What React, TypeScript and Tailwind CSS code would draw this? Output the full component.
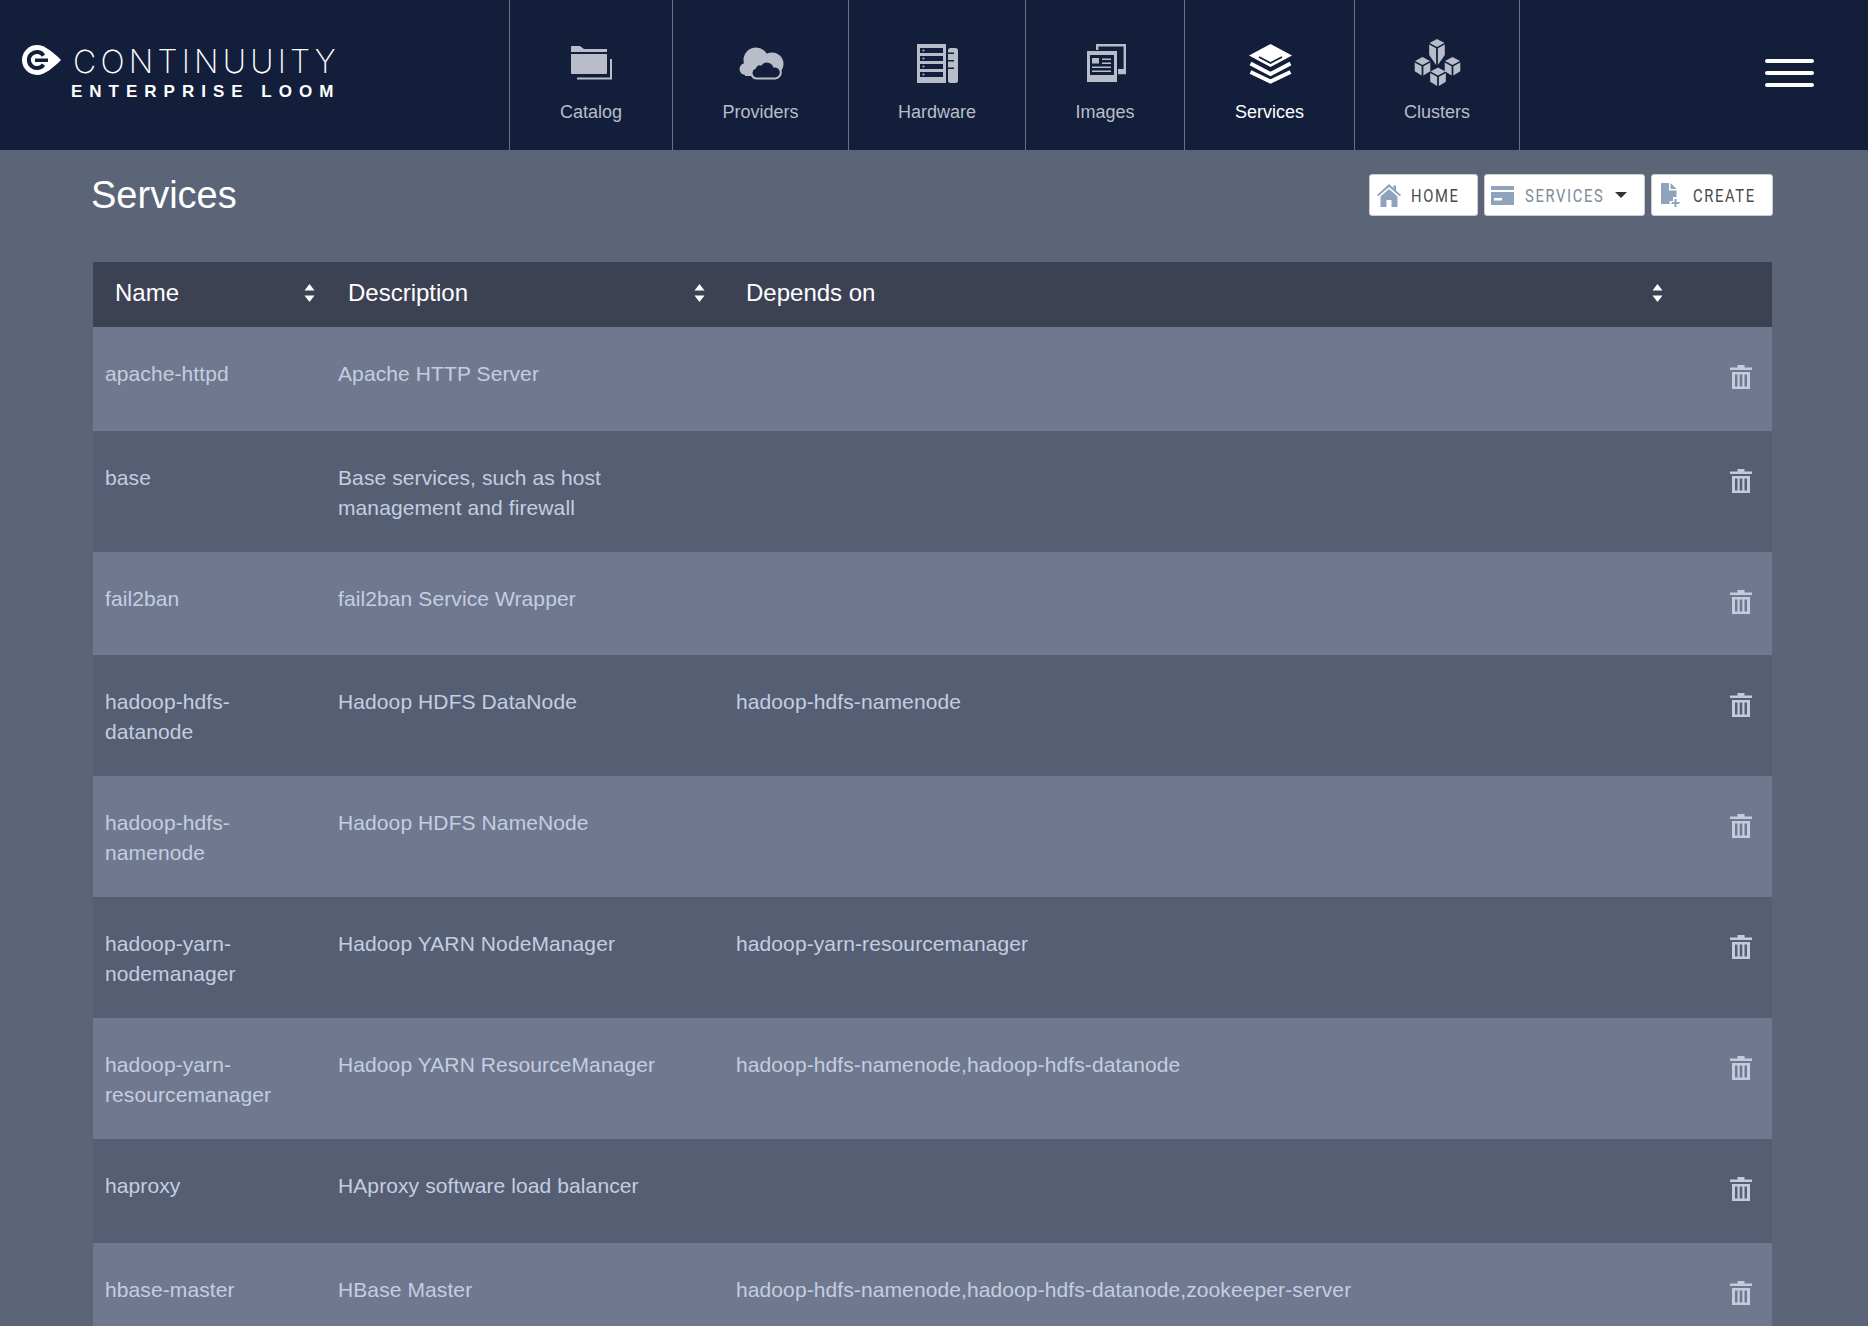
const services = [
  { name: "apache-httpd", description: "Apache HTTP Server", depends: "" },
  { name: "base", description: "Base services, such as host management and firewall", depends: "" },
  { name: "fail2ban", description: "fail2ban Service Wrapper", depends: "" },
  { name: "hadoop-hdfs-datanode", description: "Hadoop HDFS DataNode", depends: "hadoop-hdfs-namenode" },
  { name: "hadoop-hdfs-namenode", description: "Hadoop HDFS NameNode", depends: "" },
  { name: "hadoop-yarn-nodemanager", description: "Hadoop YARN NodeManager", depends: "hadoop-yarn-resourcemanager" },
  { name: "hadoop-yarn-resourcemanager", description: "Hadoop YARN ResourceManager", depends: "hadoop-hdfs-namenode,hadoop-hdfs-datanode" },
  { name: "haproxy", description: "HAproxy software load balancer", depends: "" },
  { name: "hbase-master", description: "HBase Master", depends: "hadoop-hdfs-namenode,hadoop-hdfs-datanode,zookeeper-server" },
];

function NavIcon({ children }: { children: React.ReactNode }) {
  return (
    <svg viewBox="0 0 48 48" className="h-12 w-12 overflow-visible fill-current">
      {children}
    </svg>
  );
}

function Cube({ c, y }: { c: number; y: number }) {
  return (
    <g>
      <path d={`M${c} ${y}l7.5 4-7.5 4-7.5-4z`} />
      <path d={`M${c - 7.8} ${y + 5.5}l6.9 3.8v9.2l-6.9-4.2z`} />
      <path d={`M${c + 7.8} ${y + 5.5}l-6.9 3.8v9.2l6.9-4.2z`} />
    </g>
  );
}

const navItems = [
  {
    label: "Catalog",
    width: "w-[164px]",
    icon: (
      <NavIcon>
        <path d="M4 7a1 1 0 0 1 1-1h8l4 3h23v3H4z" />
        <path d="M4 14h36v19a1 1 0 0 1-1 1H5a1 1 0 0 1-1-1z" />
        <path d="M44 19v19.500H10" fill="none" stroke="currentColor" strokeWidth="2" />
      </NavIcon>
    ),
  },
  {
    label: "Providers",
    width: "w-[176px]",
    icon: (
      <NavIcon>
        <circle cx="19" cy="20" r="12.500" />
        <circle cx="35" cy="24" r="11.500" />
        <circle cx="8.500" cy="29" r="6" />
        <rect x="8" y="24" width="28" height="12" />
        <path
          d="M20 38.500a5.500 5.500 0 0 1-2-10.600 5 5 0 0 1 6-3.400 7.500 7.500 0 0 1 13 2 6 6 0 0 1 1.500 12z"
          fill="#121e3a"
          stroke="currentColor"
          strokeWidth="2"
        />
      </NavIcon>
    ),
  },
  {
    label: "Hardware",
    width: "w-[177px]",
    icon: (
      <NavIcon>
        <rect x="4" y="4" width="29" height="39" />
        <g fill="#121e3a">
          <rect x="7" y="8" width="23" height="5" />
          <rect x="7" y="16" width="23" height="5" />
          <rect x="7" y="24" width="23" height="5" />
          <rect x="7" y="32" width="23" height="5" />
        </g>
        <circle cx="10.500" cy="10.500" r="1" />
        <circle cx="10.500" cy="18.500" r="1" />
        <circle cx="10.500" cy="26.500" r="1" />
        <circle cx="10.500" cy="34.500" r="1" />
        <rect x="35" y="8" width="10" height="35" rx="2.500" />
        <g fill="#121e3a">
          <rect x="35" y="12.500" width="6" height="1.500" />
          <rect x="35" y="20" width="6" height="1.500" />
          <rect x="35" y="27.500" width="6" height="1.500" />
        </g>
      </NavIcon>
    ),
  },
  {
    label: "Images",
    width: "w-[159px]",
    icon: (
      <NavIcon>
        <path d="M16.200 10V5.200h27.600V33H37" fill="none" stroke="currentColor" strokeWidth="2.400" />
        <rect x="37" y="29" width="8" height="5" />
        <rect x="6" y="11" width="30" height="31" />
        <rect x="9" y="15" width="24" height="20" fill="#121e3a" />
        <rect x="11" y="18" width="7" height="5.500" />
        <rect x="21" y="18.500" width="9" height="1.500" />
        <rect x="21" y="22.500" width="9" height="1.500" />
        <rect x="11" y="26.500" width="19" height="1.500" />
        <rect x="11" y="30.500" width="19" height="1.500" />
      </NavIcon>
    ),
  },
  {
    label: "Services",
    width: "w-[170px]",
    active: true,
    icon: (
      <NavIcon>
        <path d="M24.500 4L46 15.500 24.500 27 3 15.500z" />
        <path d="M13 17l11.500 6L36 17" fill="none" stroke="#121e3a" strokeWidth="1.800" />
        <path d="M4.500 23.500l20 10.500 20-10.500" fill="none" stroke="currentColor" strokeWidth="4" />
        <path d="M4.500 32l20 9.500 20-9.500" fill="none" stroke="currentColor" strokeWidth="4" />
      </NavIcon>
    ),
  },
  {
    label: "Clusters",
    width: "w-[165px]",
    icon: (
      <NavIcon>
        <path d="M24 -1l7.500 4-7.500 4-7.500-4z" />
        <path d="M16.200 4.500l6.900 3.800V25l-6.900-10z" />
        <path d="M31.800 4.500l-6.900 3.800V25l6.900-10z" />
        <Cube c={9.500} y={17} />
        <Cube c={39.500} y={17} />
        <Cube c={25} y={27.500} />
      </NavIcon>
    ),
  },
];

function SortIcon() {
  return (
    <svg viewBox="0 0 11 18" className="h-[18px] w-[11px] shrink-0 fill-white">
      <path d="M5.500 0L10.500 6.500H0.500z" />
      <path d="M5.500 18L10.500 11.500H0.500z" />
    </svg>
  );
}

function TrashIcon() {
  return (
    <svg viewBox="0 0 22 24" className="h-6 w-[22px] fill-[#c3cbdc]">
      <path d="M7.500 0h7v2.500H22V5H0V2.500h7.500z" />
      <path d="M2 7h18v17H2zm3 2.500v12h2.500v-12zm4.700 0v12h2.600v-12zm4.800 0v12H17v-12z" fillRule="evenodd" />
    </svg>
  );
}

function ToolButton({ icon, label, labelWidth, muted, caret, className }: {
  icon: React.ReactNode;
  label: string;
  labelWidth: string;
  muted?: boolean;
  caret?: boolean;
  className: string;
}) {
  return (
    <button
      className={`flex h-[42px] items-center rounded-[3px] border border-[#c9ccd3] bg-white text-[18px] tracking-[2px] ${className} ${muted ? "text-[#7d8b9b]" : "text-[#4a4a4a]"}`}
    >
      {icon}
      <span className={`inline-block origin-left scale-x-[0.82] whitespace-nowrap text-left font-['Roboto',sans-serif] ${labelWidth}`}>
        {label}
      </span>
      {caret && <span className="ml-[10px] h-0 w-0 border-x-[6px] border-t-[6px] border-x-transparent border-t-[#333]" />}
    </button>
  );
}

export default function App() {
  return (
    <div className="h-screen overflow-hidden bg-[#5c6478] font-['Liberation_Sans',Arial,sans-serif]">
      <header className="relative flex h-[150px] bg-[#121e3a]">
        <div className="flex w-[509px] shrink-0 pl-[22px] pt-[45px]">
          <svg viewBox="0 0 39 30" className="h-[30px] w-[39px] shrink-0">
            <path d="M15 0C23 0 32 8 39 15 32 22 23 30 15 30A15 15 0 0 1 15 0z" fill="#fff" />
            <path d="M21.500 10.500A8 8 0 1 0 21.500 19.500" fill="none" stroke="#121e3a" strokeWidth="4" />
            <rect x="13" y="13.500" width="13" height="3.500" fill="#121e3a" />
          </svg>
          <div className="ml-[12px] text-white">
            <div className="-mt-[1px] whitespace-nowrap font-['Inter',sans-serif] text-[32px] font-extralight leading-[36px] tracking-[4.2px]">
              CONTINUUITY
            </div>
            <div className="-ml-[2px] mt-[3px] whitespace-nowrap text-[17px] font-bold leading-[18px] tracking-[7px]">
              ENTERPRISE LOOM
            </div>
          </div>
        </div>
        <nav className="flex">
          {navItems.map((item) => (
            <a
              key={item.label}
              className={`flex h-[150px] flex-col items-center border-r border-[#6b7280] pt-[40px] first:border-l ${item.width} ${item.active ? "text-white" : "text-[#b8bdc9]"}`}
            >
              {item.icon}
              <span className="mt-[14px] text-[18px] leading-[20px]">{item.label}</span>
            </a>
          ))}
        </nav>
        <div className="absolute right-[54px] top-[59px] flex w-[49px] flex-col gap-[8px]">
          <span className="h-[4px] rounded-full bg-white" />
          <span className="h-[4px] rounded-full bg-white" />
          <span className="h-[4px] rounded-full bg-white" />
        </div>
      </header>

      <div className="ml-[93px] w-[1680px]">
        <div className="flex h-[112px] items-center justify-between pb-[22px]">
          <h1 className="-ml-[2px] text-[38px] leading-[40px] text-white">Services</h1>
          <div className="flex gap-[6px]">
            <ToolButton
              className="w-[109px] pl-[7px]"
              label="HOME"
              labelWidth="w-[47px]"
              icon={
                <svg viewBox="0 0 24 23" className="mr-[10px] h-[23px] w-[24px] shrink-0 fill-[#8fa3bd]">
                  <path d="M12 0l4.500 4V1.500H19v5L24 11l-1.200 1.300L12 3 1.200 12.300 0 11z" />
                  <path d="M3.500 12.500L12 5l8.500 7.500V23H14.500v-7h-5v7h-6z" />
                </svg>
              }
            />
            <ToolButton
              className="w-[161px] pl-[6px]"
              label="SERVICES"
              labelWidth="w-[80px]"
              muted
              caret
              icon={
                <svg viewBox="0 0 23 19" className="mr-[11px] h-[19px] w-[23px] shrink-0 fill-[#8fa3bd]">
                  <rect width="23" height="4" />
                  <path d="M0 6h23v13H0zm3 6v2.500h8V12z" fillRule="evenodd" />
                </svg>
              }
            />
            <ToolButton
              className="w-[122px] pl-[9px]"
              label="CREATE"
              labelWidth="w-[62px]"
              icon={
                <svg viewBox="0 0 19 24" className="mr-[13px] h-[24px] w-[19px] shrink-0 fill-[#8fa3bd]">
                  <path d="M0 0h8v7.500h7.500V14H12v4H8.500v3H0z" />
                  <path d="M9.500 0l6 6h-6z" />
                  <path d="M13.500 16h2v3h3v2h-3v3h-2v-3h-3v-2h3z" />
                </svg>
              }
            />
          </div>
        </div>

        <div className="w-[1679px]">
          <div className="grid h-[65px] grid-cols-[233px_398px_1fr] items-center bg-[#3c4154] pb-[3px] text-[24px] text-white">
            <div className="flex items-center justify-between pl-[22px] pr-[11px]">
              <span>Name</span>
              <SortIcon />
            </div>
            <div className="flex items-center justify-between pl-[22px] pr-[19px]">
              <span>Description</span>
              <SortIcon />
            </div>
            <div className="flex items-center justify-between pl-[22px] pr-[109px]">
              <span>Depends on</span>
              <SortIcon />
            </div>
          </div>

          {services.map((service) => (
            <div
              key={service.name}
              className="grid min-h-[103.5px] grid-cols-[233px_398px_1fr_42px] pb-[29px] pt-[32px] text-[21px] leading-[30px] tracking-[0.1px] text-[#c3cee0] odd:bg-[#565e73] even:bg-[#70788f]"
            >
              <div className="px-[12px]">{service.name}</div>
              <div className="px-[12px]">{service.description}</div>
              <div className="px-[12px]">{service.depends}</div>
              <div className="pt-[6px]">
                <TrashIcon />
              </div>
            </div>
          ))}
        </div>
      </div>
    </div>
  );
}
